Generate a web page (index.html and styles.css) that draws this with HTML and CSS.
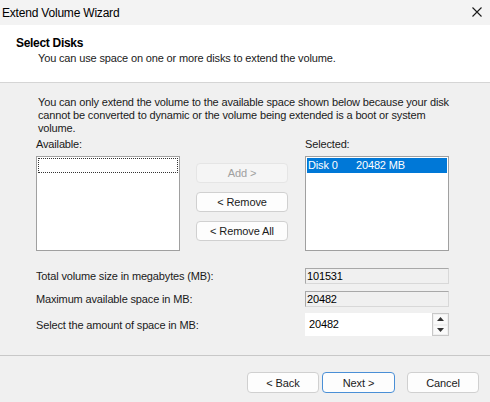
FILE: index.html
```html
<!DOCTYPE html>
<html lang="en">
<head>
    <meta charset="UTF-8">
    <title>Extend Volume Wizard</title>
    <link rel="stylesheet" href="styles.css">
</head>
<body>
    <div class="window">
        <div class="titlebar">
            <span class="title">Extend Volume Wizard</span>
            <svg class="close" width="10" height="10" viewBox="0 0 10 10">
                <path d="M0.5 0.5 L9.5 9.5 M9.5 0.5 L0.5 9.5" stroke="#1a1a1a" stroke-width="1.1" fill="none"/>
            </svg>
        </div>
        <div class="header">
            <div class="header-title">Select Disks</div>
            <div class="header-sub">You can use space on one or more disks to extend the volume.</div>
        </div>
        <div class="content">
            <p class="intro">You can only extend the volume to the available space shown below because your disk<br>cannot be converted to dynamic or the volume being extended is a boot or system<br>volume.</p>
            <div class="picker">
                <div class="col">
                    <div class="label">Available:</div>
                    <div class="listbox"><div class="focus-row"></div></div>
                </div>
                <div class="mid">
                    <button class="btn disabled">Add &gt;</button>
                    <button class="btn">&lt; Remove</button>
                    <button class="btn">&lt; Remove All</button>
                </div>
                <div class="col">
                    <div class="label">Selected:</div>
                    <div class="listbox"><div class="item selected"><span class="disk">Disk 0</span><span>20482 MB</span></div></div>
                </div>
            </div>
            <div class="fields">
                <div class="field">
                    <span>Total volume size in megabytes (MB):</span>
                    <div class="box readonly">101531</div>
                </div>
                <div class="field">
                    <span>Maximum available space in MB:</span>
                    <div class="box readonly">20482</div>
                </div>
                <div class="field spin-row">
                    <span>Select the amount of space in MB:</span>
                    <div class="spin">
                        <div class="spin-value">20482</div>
                        <div class="spin-btns">
                            <div class="arrow"><svg width="7" height="4" viewBox="0 0 7 4"><path d="M0 4 L3.5 0 L7 4 Z" fill="#333"/></svg></div>
                            <div class="arrow"><svg width="7" height="4" viewBox="0 0 7 4"><path d="M0 0 L3.5 4 L7 0 Z" fill="#333"/></svg></div>
                        </div>
                    </div>
                </div>
            </div>
        </div>
        <div class="footer">
            <button class="btn wide">&lt; Back</button>
            <button class="btn wide primary">Next &gt;</button>
            <button class="btn wide cancel">Cancel</button>
        </div>
    </div>
</body>
</html>
```

FILE: styles.css
```css
body {
    margin: 0;
    font-family: "Liberation Sans", Arial, sans-serif;
    font-size: 11px;
    letter-spacing: -0.15px;
    color: #1a1a1a;
    background-color: #f0f0f0;
}
.window {
    width: 490px;
    height: 402px;
    overflow: hidden;
}
.titlebar {
    height: 25px;
    background-color: #f3f3f3;
    display: flex;
    align-items: center;
    justify-content: space-between;
    padding: 0 8px 0 2px;
    color: #000;
    font-size: 12px;
    letter-spacing: -0.2px;
}
.close {
    margin-top: -2px;
}
.header {
    background-color: #fff;
    border-bottom: 1px solid #d5d5d5;
    box-sizing: border-box;
    height: 58px;
    padding-top: 11px;
}
.header-title {
    font-weight: bold;
    font-size: 12px;
    letter-spacing: -0.3px;
    color: #000;
    margin-left: 16px;
    line-height: 14px;
}
.header-sub {
    margin-left: 38px;
    margin-top: 1px;
    line-height: 14px;
}
.content {
    height: 273px;
    border-bottom: 1px solid #c8c8c8;
    padding: 13px 0 0 36px;
    box-sizing: border-box;
}
.intro {
    margin: 0 0 2px 2px;
    white-space: nowrap;
    line-height: 13px;
}
.picker {
    display: flex;
    height: 114px;
}
.col {
    width: 144px;
    display: flex;
    flex-direction: column;
}
.label {
    line-height: 14px;
    margin-bottom: 5px;
}
.listbox {
    height: 95px;
    background-color: #fff;
    border: 1px solid #a0a0a0;
    box-sizing: border-box;
    padding: 1px;
}
.focus-row {
    height: 15px;
    border: 1px dotted #333;
    box-sizing: border-box;
}
.item {
    height: 15px;
    line-height: 15px;
    padding-left: 1px;
}
.selected {
    background-color: #0078d7;
    color: #fff;
}
.disk {
    display: inline-block;
    width: 48px;
}
.mid {
    width: 125px;
    display: flex;
    flex-direction: column;
    gap: 9px;
    padding: 26px 0 0 16px;
    box-sizing: border-box;
}
.btn {
    font-family: inherit;
    font-size: 11px;
    letter-spacing: -0.1px;
    color: #1a1a1a;
    width: 92px;
    height: 20px;
    padding: 0;
    background-color: #fdfdfd;
    border: 1px solid #d0d0d0;
    border-radius: 4px;
    box-sizing: border-box;
}
.btn.disabled {
    background-color: #f5f5f5;
    border-color: #e5e5e5;
    color: #a0a0a0;
}
.fields {
    display: flex;
    flex-direction: column;
    gap: 7px;
    padding-top: 17px;
}
.field {
    display: flex;
    align-items: center;
    justify-content: space-between;
    width: 413px;
}
.box {
    width: 144px;
    height: 16px;
    line-height: 15px;
    box-sizing: border-box;
    padding-left: 1px;
}
.readonly {
    background-color: #f0f0f0;
    border: 1px solid #d8d8d8;
    border-top-color: #a8a8a8;
    border-left-color: #a8a8a8;
    color: #000;
}
.spin-row {
    margin-top: -1px;
}
.spin {
    width: 144px;
    height: 23px;
    display: flex;
    background-color: #fff;
    box-sizing: border-box;
}
.spin-value {
    flex: 1;
    line-height: 23px;
    padding-left: 4px;
    color: #000;
}
.spin-btns {
    width: 17px;
    display: flex;
    flex-direction: column;
    border: 1px solid #c8c8c8;
    background-color: #f0f0f0;
    box-sizing: border-box;
}
.arrow {
    flex: 1;
    display: flex;
    align-items: center;
    justify-content: center;
    margin: 1px;
    background-color: #fafafa;
}
.footer {
    display: flex;
    padding: 16px 0 0 247px;
}
.btn.wide {
    width: 72px;
    height: 21px;
}
.btn.primary {
    width: 73px;
    margin-left: 3px;
    border-color: #4a8fd6;
}
.btn.cancel {
    margin-left: 12px;
}
```
